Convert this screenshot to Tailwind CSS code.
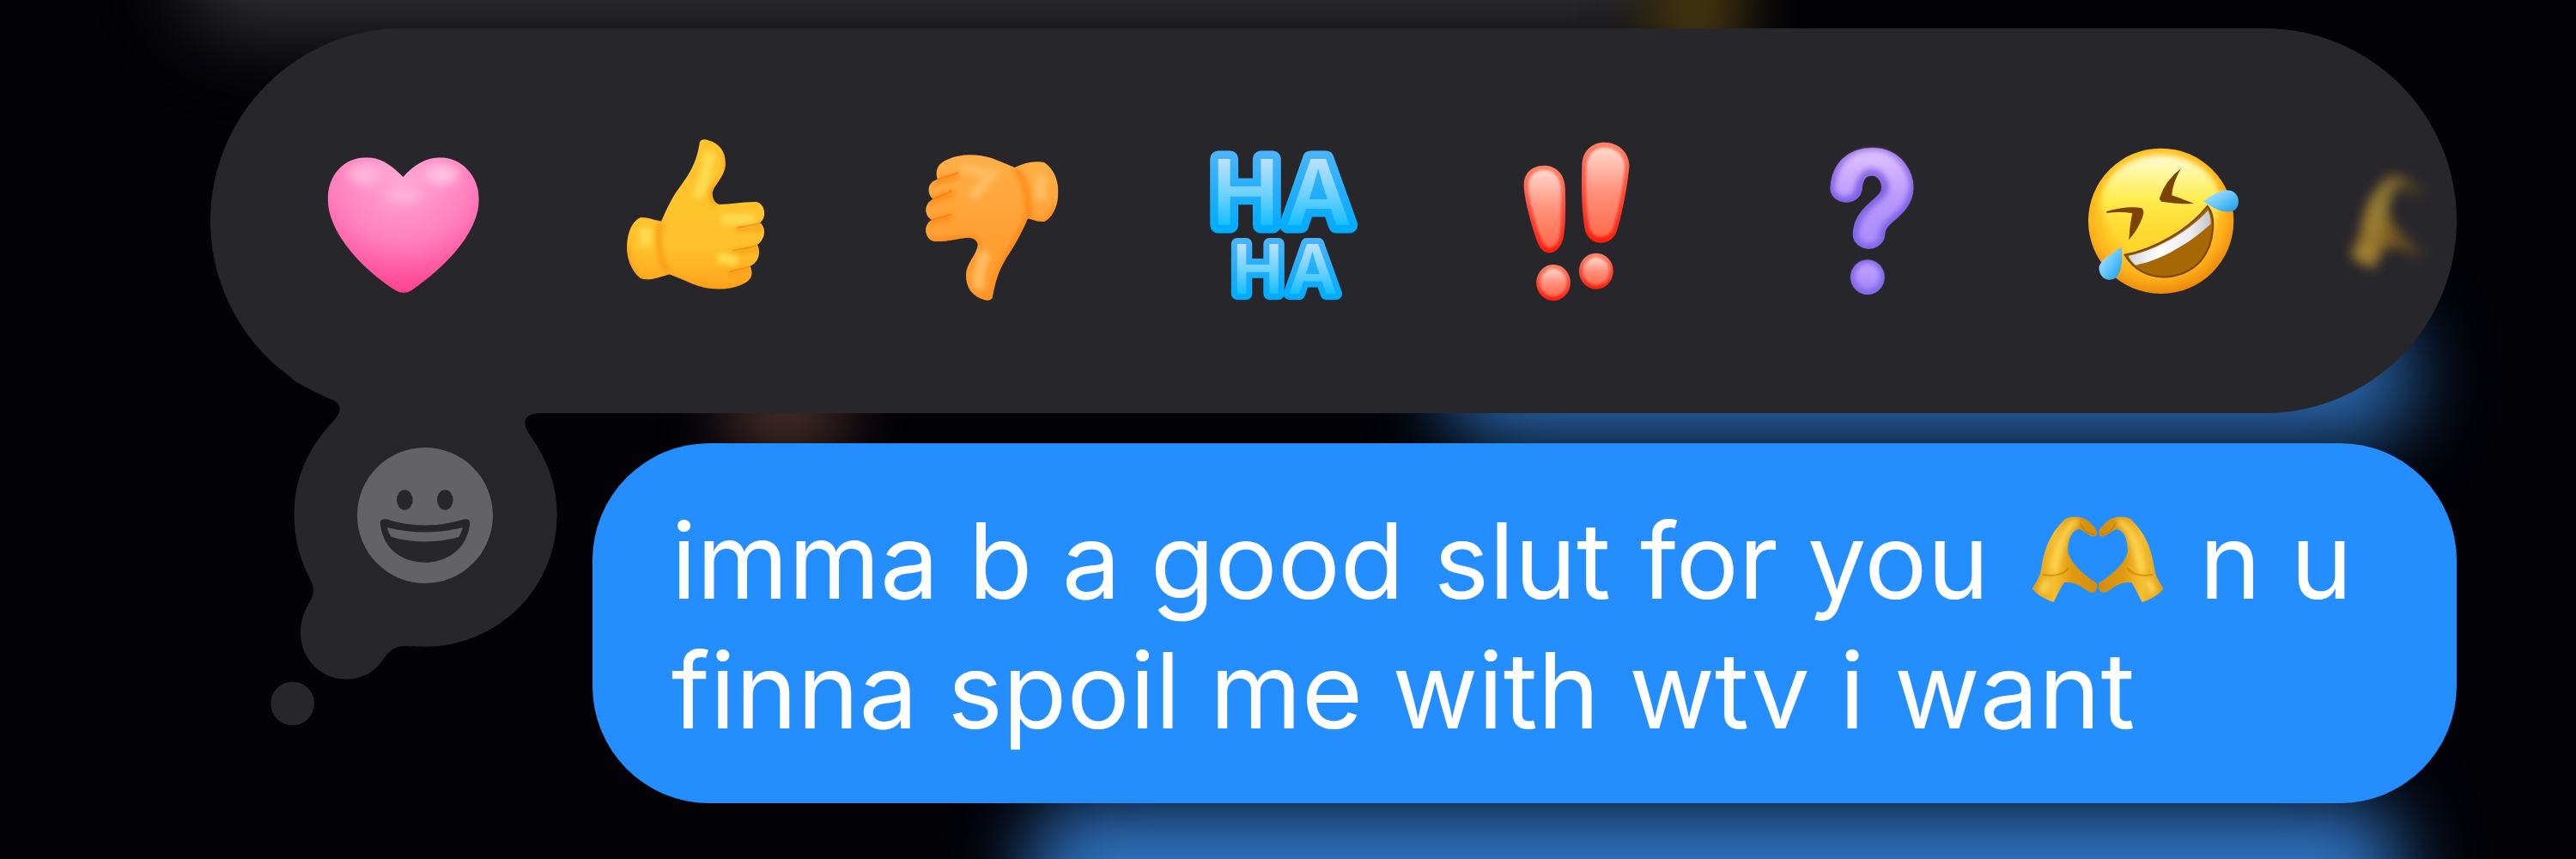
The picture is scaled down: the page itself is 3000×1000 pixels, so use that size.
<!DOCTYPE html>
<html lang="en">
<head>
<meta charset="utf-8">
<meta name="viewport" content="width=device-width, initial-scale=1">
<title>Messages</title>
<script src="https://cdn.jsdelivr.net/npm/@tailwindcss/browser@4"></script>
</head>
<body class="bg-[#020207]">

<!-- Shared artwork -->
<svg class="absolute size-0" aria-hidden="true">
  <defs>
    <linearGradient id="hand" x1="0" y1="0" x2="1" y2="0">
      <stop offset="0" stop-color="#dd9a10"/><stop offset=".35" stop-color="#f6be30"/><stop offset=".6" stop-color="#e09a10"/><stop offset="1" stop-color="#d08c0e"/>
    </linearGradient>
    <filter id="soft" x="-30%" y="-30%" width="160%" height="160%"><feGaussianBlur stdDeviation="9"/></filter>
    <filter id="softer" x="-30%" y="-30%" width="160%" height="160%"><feGaussianBlur stdDeviation="16"/></filter>
    <clipPath id="hand-clip"><path d="M165 370C185 335 190 322 193 300C205 215 225 175 265 128C290 113 325 118 345 145C360 160 366 170 360 186C345 195 330 175 310 163C285 165 274 200 274 240C280 280 320 320 362 352C368 380 350 392 335 380C310 360 290 345 262 350C250 370 240 400 230 418C210 410 180 395 165 370Z"/></clipPath>
    <symbol id="heart-hands" viewBox="0 0 152 100">
      <g transform="scale(.3827 .3333) translate(-166 -118)">
        <g id="one-hand" clip-path="url(#hand-clip)">
          <path fill="url(#hand)" d="M160 110H370V425H160Z"/>
          <path fill="none" stroke="#c07c06" stroke-width="6" stroke-linecap="round" opacity=".6" d="M312 142C318 165 335 178 352 182M274 300C262 320 235 330 200 322"/>
          <path fill="none" stroke="#ffdb5c" stroke-width="24" stroke-linecap="round" opacity=".8" filter="url(#soft)" d="M295 138C258 170 248 230 232 300M208 350L198 378"/>
        </g>
        <use href="#one-hand" transform="translate(730 0) scale(-1 1)"/>
      </g>
    </symbol>
  </defs>
</svg>

<main class="relative isolate flex min-h-screen flex-col overflow-hidden pt-[33px] pr-[139px] pb-16 pl-[245px]">

  <!-- Dimmed conversation glowing behind the overlay -->
  <div class="absolute inset-0 -z-10" aria-hidden="true">
    <div class="absolute -top-40 right-[35%] left-[7%] h-[200px] rounded-[80px] bg-[#2f2f34] blur-[44px]"></div>
    <div class="absolute -top-20 left-[64%] h-[170px] w-[110px] rounded-[40px] bg-[#453510] blur-[34px]"></div>
    <div class="absolute top-[430px] left-[28%] h-[100px] w-[150px] rounded-full bg-[#452c29] blur-[34px]"></div>
    <div class="absolute top-[360px] right-[190px] left-[56%] h-[154px] rounded-[70px] bg-[#2a68ae] blur-[44px]"></div>
    <div class="absolute top-[936px] right-[205px] left-[40%] h-[240px] rounded-[60px] bg-[#2f72c0] blur-[44px]"></div>
  </div>

  <section class="relative" aria-label="Reactions">
    <!-- Thought-bubble tail -->
    <svg class="absolute top-[407px] left-[35px] h-[440px] w-[460px]" viewBox="0 0 1380 1320" fill="#27262b" aria-hidden="true">
      <path d="M175 0C230 38 275 52 315 70Q347 88 347 108Q347 125 328 147C235 245 188 350 188 478C188 570 210 640 245 705Q262 735 250 765C235 800 210 830 210 888C210 980 280 1052 368 1052C420 1052 462 1030 487 998C515 965 525 936 575 936L647 938A459 459 0 0 0 1106 478C1106 380 1075 290 1015 205Q990 170 995 148Q1003 123 1050 123L1050 0Z"/>
      <circle cx="182" cy="1137" r="76"/>
    </svg>

    <div class="flex h-[448px] items-center overflow-hidden rounded-full bg-[#27262b] pl-[53px]">
      <button type="button" aria-label="Heart" class="flex w-[342px] shrink-0 justify-center">
        <svg class="size-[200px]" viewBox="0 0 200 200">
          <defs>
            <radialGradient id="pink" cx=".5" cy=".2" r=".76"><stop offset="0" stop-color="#ffa8d6"/><stop offset=".55" stop-color="#ff80bf"/><stop offset="1" stop-color="#ff4090"/></radialGradient>
            <clipPath id="heart-clip"><path d="M312 198C270 150 240 130 200 130C130 130 83 195 83 275C83 400 200 530 290 595Q314 610 337 595C430 520 543 400 543 275C543 195 490 130 425 130C385 130 350 150 312 198Z"/></clipPath>
          </defs>
          <g transform="translate(-19 -17) scale(.3827 .3333)" clip-path="url(#heart-clip)">
            <path fill="url(#pink)" d="M60 100H560V620H60Z"/>
            <g filter="url(#softer)"><ellipse cx="195" cy="190" rx="50" ry="36" fill="#ffb4da"/><ellipse cx="430" cy="190" rx="50" ry="36" fill="#ffc0e0"/><ellipse cx="312" cy="262" rx="50" ry="26" fill="#ffb2da"/></g>
          </g>
        </svg>
      </button>
      <button type="button" aria-label="Thumbs up" class="flex w-[342px] shrink-0 justify-center">
        <svg class="size-[200px]" viewBox="0 0 200 200">
          <defs>
            <linearGradient id="up" x1="0" y1="0" x2="0" y2="1"><stop offset="0" stop-color="#ffc42c"/><stop offset=".7" stop-color="#ffc22c"/><stop offset="1" stop-color="#ff9f1c"/></linearGradient>
            <clipPath id="up-clip"><path d="M1215 75Q1222 62 1240 70C1275 80 1293 110 1293 150C1293 200 1255 225 1253 258Q1256 290 1275 294C1310 294 1340 285 1385 285C1415 290 1420 340 1398 358C1418 375 1415 415 1390 435C1402 460 1395 495 1368 510C1382 545 1365 565 1340 575C1300 595 1240 595 1190 570Q1150 550 1122 538C1090 550 1060 562 1035 552C1005 525 993 480 993 440C995 390 1010 350 1035 340C1060 337 1075 350 1098 353C1110 320 1130 270 1150 240C1185 185 1205 150 1215 75Z"/></clipPath>
          </defs>
          <g transform="translate(-361 -17) scale(.3827 .3333)" clip-path="url(#up-clip)">
            <path fill="url(#up)" d="M980 50H1430V610H980Z"/>
            <g filter="url(#soft)" fill="none" stroke-width="16">
              <path stroke="#f79a12" d="M1300 110V190L1250 250L1262 290M1098 353C1085 400 1090 500 1122 538M1410 374C1370 378 1345 376 1325 382M1400 448C1360 456 1335 456 1310 464M1380 524C1345 528 1325 530 1300 538M990 430C993 500 1020 570 1050 560M1120 550Q1240 620 1370 575"/>
              <path stroke="#ffdc50" stroke-width="34" d="M1245 110Q1235 210 1205 270M1050 375V440M1280 345H1380M1270 480L1330 490"/>
            </g>
            <path fill="none" stroke="#ef8c0a" stroke-width="5" opacity=".75" d="M1398 358C1370 372 1345 368 1328 376M1390 435C1360 450 1335 448 1315 456M1368 510C1345 522 1325 520 1305 530"/>
          </g>
        </svg>
      </button>
      <button type="button" aria-label="Thumbs down" class="flex w-[342px] shrink-0 justify-center">
        <svg class="size-[200px]" viewBox="0 0 200 200">
          <defs>
            <linearGradient id="down" x1="0" y1="0" x2="0" y2="1"><stop offset="0" stop-color="#ffb04a"/><stop offset=".45" stop-color="#ffa336"/><stop offset="1" stop-color="#ff9426"/></linearGradient>
            <clipPath id="down-clip"><path d="M370 165C400 148 430 140 460 147C490 170 503 210 503 250C503 300 485 340 462 353C440 358 425 345 410 343C395 385 370 440 345 480C320 530 312 560 302 622Q295 632 280 628C240 615 222 585 222 540C222 500 255 470 258 435Q255 412 232 410C200 410 170 425 125 423C95 415 90 365 118 348C92 330 95 290 122 275C100 255 105 215 135 207C125 165 145 145 170 135C210 115 260 118 300 132Q340 150 370 165Z"/></clipPath>
          </defs>
          <g transform="translate(-13 -17) scale(.3827 .3333)" clip-path="url(#down-clip)">
            <path fill="url(#down)" d="M80 100H520V650H80Z"/>
            <g filter="url(#soft)" fill="none" stroke-width="16">
              <path stroke="#ff8412" d="M410 343L340 490L305 620M372 170C410 220 415 300 410 343M120 216C160 206 180 204 200 192M105 284C145 272 160 268 186 254M105 358C140 346 155 346 180 336M110 426L235 412L262 430M412 350L470 360L500 300"/>
              <path stroke="#ffbc60" stroke-width="34" d="M285 460Q250 540 265 590M450 190V280M210 165L300 190L240 270"/>
            </g>
            <path fill="none" stroke="#f07a08" stroke-width="5" opacity=".75" d="M135 207C160 195 180 195 198 182M122 275C145 262 160 260 180 245M118 348C140 338 155 340 178 328"/>
          </g>
        </svg>
      </button>
      <button type="button" class="flex w-[342px] shrink-0 justify-center">
        <svg class="size-[200px] overflow-visible" viewBox="0 0 200 200" font-family="Inter, 'Liberation Sans', sans-serif" font-weight="600" stroke-linejoin="round" stroke-linecap="round">
          <defs>
            <linearGradient id="sky" x1="0" y1="0" x2="0" y2="1"><stop offset=".2" stop-color="#bce2ff"/><stop offset=".55" stop-color="#66d0ff"/><stop offset=".85" stop-color="#04bcff"/></linearGradient>
            <linearGradient id="sea" x1="0" y1="0" x2="0" y2="1"><stop offset=".15" stop-color="#4bb4fa"/><stop offset=".5" stop-color="#22aefc"/><stop offset=".85" stop-color="#00acff"/></linearGradient>
          </defs>
          <g fill="url(#sky)" stroke="url(#sea)" paint-order="stroke">
            <text x="16" y="105" font-size="106" stroke-width="19">H<tspan dx="7">A</tspan></text>
            <text x="40" y="185" font-size="80" stroke-width="14">H<tspan dx="5">A</tspan></text>
          </g>
        </svg>
      </button>
      <button type="button" aria-label="Emphasize" class="flex w-[342px] shrink-0 justify-center">
        <svg class="size-[200px]" viewBox="0 0 200 200">
          <defs>
            <linearGradient id="red" x1="0" y1="0" x2="0" y2="1"><stop offset="0" stop-color="#ff8468"/><stop offset=".5" stop-color="#fb4b3c"/><stop offset="1" stop-color="#fa1e0c"/></linearGradient>
            <linearGradient id="coral" x1="0" y1="0" x2="0" y2="1"><stop offset="0" stop-color="#ffd8ce"/><stop offset=".5" stop-color="#ff917a"/><stop offset="1" stop-color="#ff6a4c"/></linearGradient>
            <filter id="edge"><feGaussianBlur stdDeviation="4"/></filter>
          </defs>
          <g transform="translate(-37 -17) scale(.3827 .3333)">
            <g fill="url(#red)">
              <path d="M195 225C195 180 225 158 256 158C295 158 320 190 321 240C323 320 322 400 310 430C290 475 255 475 238 430C220 380 195 270 195 225Z"/>
              <path d="M372 160C372 105 405 77 440 77C480 77 516 110 516 160C510 240 490 350 475 395C455 440 400 440 383 390C370 330 370 220 372 160Z"/>
              <ellipse cx="285" cy="567" rx="52" ry="63"/><ellipse cx="415" cy="527" rx="52" ry="63"/>
            </g>
            <g fill="url(#coral)" filter="url(#edge)">
              <path d="M209 230C209 195 230 174 256 174C288 174 306 200 308 245C309 320 308 390 300 420C286 452 262 452 250 420C232 370 209 275 209 230Z"/>
              <path d="M386 165C386 118 412 96 440 96C474 96 502 122 502 165C496 240 478 340 464 384C448 415 408 415 396 380C384 320 384 220 386 165Z"/>
              <ellipse cx="285" cy="567" rx="40" ry="48"/><ellipse cx="415" cy="527" rx="40" ry="48"/>
            </g>
          </g>
        </svg>
      </button>
      <button type="button" aria-label="Question" class="flex w-[342px] shrink-0 justify-center">
        <svg class="size-[200px]" viewBox="0 0 200 200">
          <defs>
            <linearGradient id="violet" gradientUnits="userSpaceOnUse" x1="0" y1="95" x2="0" y2="610"><stop offset="0" stop-color="#a87fe8"/><stop offset=".3" stop-color="#8062e4"/><stop offset="1" stop-color="#8468ea"/></linearGradient>
            <linearGradient id="lilac" gradientUnits="userSpaceOnUse" x1="0" y1="95" x2="0" y2="610"><stop offset="0" stop-color="#e4c4ff"/><stop offset=".35" stop-color="#b898fc"/><stop offset=".7" stop-color="#a78cfc"/><stop offset=".78" stop-color="#c8a8ff"/><stop offset="1" stop-color="#9c80f8"/></linearGradient>
          </defs>
          <g transform="translate(-379 -17) scale(.3827 .3333)" fill="none" stroke-linecap="round">
            <path stroke="url(#violet)" stroke-width="98" d="M1176 238C1180 170 1215 145 1255 145C1310 145 1332 200 1332 235C1332 310 1245 320 1245 400"/>
            <ellipse cx="1241" cy="548" rx="52" ry="61" fill="url(#violet)"/>
            <g filter="url(#soft)">
              <path stroke="url(#lilac)" stroke-width="62" d="M1172 236C1180 165 1215 137 1255 137C1310 137 1337 200 1337 235C1332 310 1245 320 1245 400"/>
              <ellipse cx="1241" cy="545" rx="38" ry="45" fill="url(#lilac)"/>
            </g>
          </g>
        </svg>
      </button>
      <button type="button" aria-label="Rolling on the floor laughing" class="flex w-[342px] shrink-0 justify-center">
        <svg class="size-[200px]" viewBox="0 0 200 200">
          <defs>
            <radialGradient id="face" cx=".47" cy=".42" r=".58"><stop offset=".55" stop-color="#ffd62c"/><stop offset=".8" stop-color="#ffb41c"/><stop offset="1" stop-color="#ee8a0c"/></radialGradient>
            <linearGradient id="shine" x1="0" y1="0" x2="0" y2="1"><stop offset="0" stop-color="#fffbd8"/><stop offset=".45" stop-color="#ffee50"/><stop offset="1" stop-color="#ffd62c" stop-opacity="0"/></linearGradient>
            <linearGradient id="tear" x1="0" y1="0" x2="1" y2="1"><stop offset="0" stop-color="#c4ecff"/><stop offset=".6" stop-color="#55c0f8"/><stop offset="1" stop-color="#1c98e4"/></linearGradient>
            <linearGradient id="teeth" x1="0" y1="0" x2="1" y2="0"><stop offset="0" stop-color="#d4d4dc"/><stop offset=".35" stop-color="#fff"/><stop offset=".75" stop-color="#ececf2"/><stop offset="1" stop-color="#c4c4cc"/></linearGradient>
          </defs>
          <g transform="translate(-21 -17) scale(.3333)">
            <circle cx="350" cy="352" r="254" fill="url(#face)"/>
            <ellipse cx="350" cy="290" rx="208" ry="168" fill="url(#shine)" filter="url(#soft)"/>
            <g fill="#7c4400">
              <path d="M160 318Q230 298 280 306Q292 310 288 330Q275 375 238 418Q240 370 250 325Q210 318 160 324Z"/>
              <path d="M420 168Q365 210 345 272Q345 284 358 285Q420 295 465 290Q425 275 388 262Q390 220 420 168Z"/>
            </g>
            <path fill="#a66804" stroke="#7c4400" stroke-width="6" d="M224 470C330 450 450 380 512 300C542 330 540 430 490 490C430 560 290 580 224 470Z"/>
            <path fill="url(#teeth)" d="M236 474C340 452 450 385 515 315Q525 340 524 362C450 430 350 490 262 506Q245 495 236 474Z"/>
            <g fill="url(#tear)">
              <path d="M497 282C530 260 560 240 590 245C628 252 630 305 600 318C560 325 530 305 497 282Z"/>
              <path d="M212 442C215 480 218 530 190 552C160 568 130 545 134 510C145 480 185 465 212 442Z"/>
            </g>
          </g>
        </svg>
      </button>
      <button type="button" aria-label="Heart hands" class="flex w-[342px] shrink-0 justify-center">
        <svg class="size-[200px] overflow-visible blur-[7px]" viewBox="0 0 200 200">
          <defs>
            <linearGradient id="fade" gradientUnits="userSpaceOnUse" x1="-30" y1="0" x2="70" y2="0"><stop offset="0" stop-color="#fff" stop-opacity=".65"/><stop offset=".45" stop-color="#fff" stop-opacity=".5"/><stop offset="1" stop-color="#fff" stop-opacity="0"/></linearGradient>
            <mask id="fade-mask" maskUnits="userSpaceOnUse" x="-60" y="0" width="260" height="200"><rect x="-60" width="260" height="200" fill="url(#fade)"/></mask>
          </defs>
          <g mask="url(#fade-mask)"><use href="#heart-hands" x="-26" y="46" width="168" height="110"/></g>
        </svg>
      </button>
    </div>

    <!-- Emoji keyboard button inside the tail -->
    <button type="button" aria-label="Choose another emoji" class="absolute top-[488px] left-[171px] size-[158px] rounded-full">
      <svg class="size-full" viewBox="409 241 474 474" fill="#27262b">
        <circle cx="646" cy="478" r="237" fill="#636267"/>
        <ellipse cx="575" cy="424" rx="28" ry="35"/><ellipse cx="716" cy="424" rx="28" ry="35"/>
        <path d="M489 500Q495 488 510 491C600 520 690 520 785 491Q803 490 803 505C795 590 730 642 646 642C560 642 495 590 489 500Z"/>
        <path fill="#636267" d="M513 520C600 542 690 542 778 520Q772 540 765 553C690 575 600 575 528 553Q518 540 513 520Z"/>
      </svg>
    </button>
  </section>

  <p class="mt-[35px] w-fit max-w-[83%] self-end rounded-[136px] bg-[#258eff] pt-[61px] pr-16 pb-14 pl-[92px] font-[Inter,'Liberation_Sans',sans-serif] text-[122px] leading-[151px] text-white">imma b a good slut for you <svg class="mr-2 ml-4 inline h-[100px] w-[152px] align-[-4px]" role="img" aria-label="heart hands" viewBox="0 0 152 100"><use href="#heart-hands" width="152" height="100"/></svg> n u finna spoil me with wtv i want</p>
</main>
</body>
</html>
